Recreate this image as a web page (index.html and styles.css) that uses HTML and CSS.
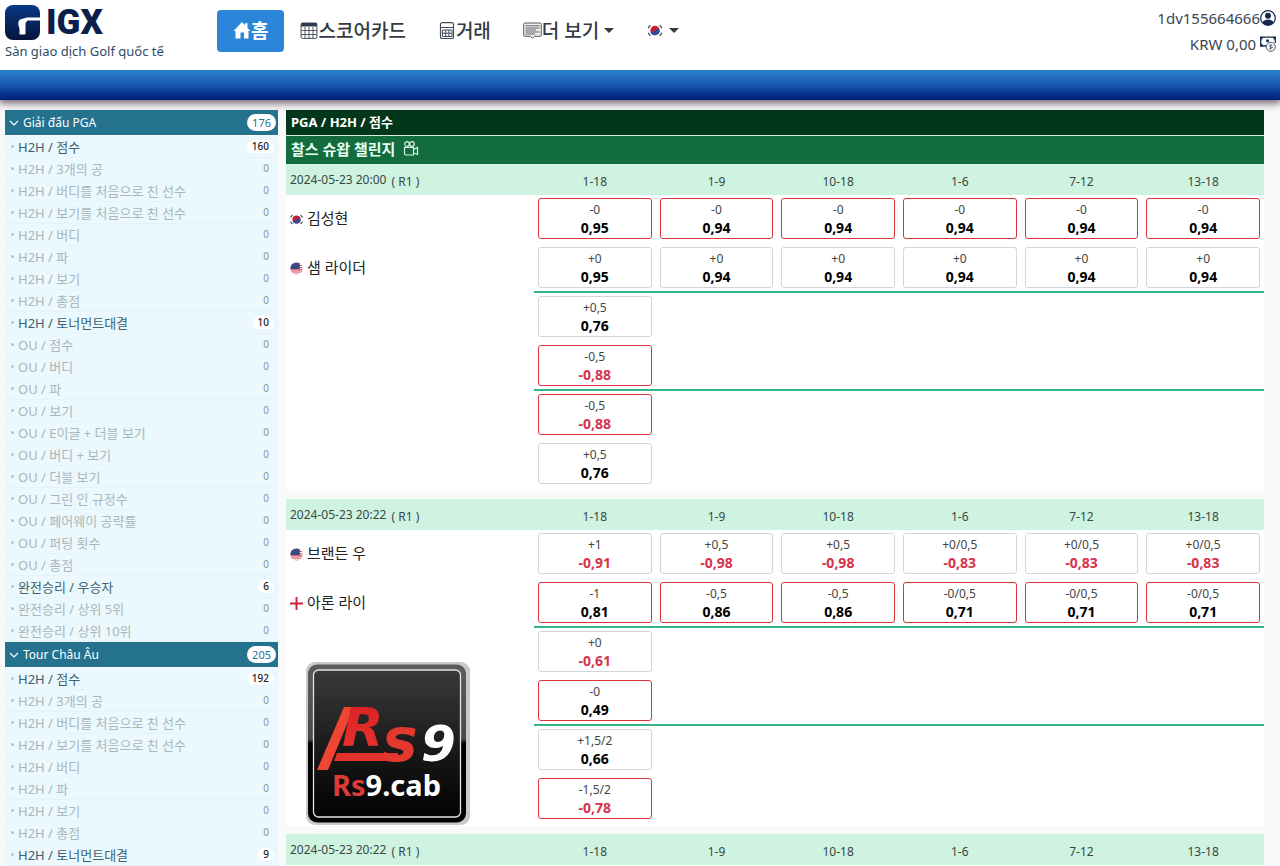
FILE: index.html
```html
<!DOCTYPE html>
<html lang="ko">
<head>
<meta charset="utf-8">
<meta name="viewport" content="width=device-width, initial-scale=1">
<title>IGX</title>
<link rel="stylesheet" href="styles.css">
</head>
<body>
<svg class="defs" width="0" height="0" aria-hidden="true">
  <defs>
    <clipPath id="round"><circle cx="8" cy="8" r="7.5"/></clipPath>
    <symbol id="flag-kr" viewBox="0 0 16 16">
      <rect width="16" height="16" fill="#fff"/>
      <circle cx="8" cy="8" r="5" fill="#c8202f"/>
      <path d="M3.200 9.500A5 5 0 0 0 12.900 7.200C11.500 5.600 9.500 6.500 8 8S4.800 10.500 3.200 9.500Z" fill="#2f4b9b"/>
      <path d="M.6 5.500 3 2.300M13 2.300 15.400 5.500M.6 10.500 3 13.700M13 13.700 15.400 10.500" stroke="#444" stroke-width="1.300"/>
    </symbol>
    <symbol id="flag-us" viewBox="0 0 16 16">
      <g clip-path="url(#round)">
        <rect width="16" height="16" fill="#fff"/>
        <path d="M0 1.500H16M0 4.300H16M0 7H16M0 9.700H16M0 12.300H16M0 15H16" stroke="#d0384a" stroke-width="1.300"/>
        <path d="M0 0H12V8.500H0Z" fill="#3a4a80"/>
      </g>
    </symbol>
    <symbol id="flag-en" viewBox="0 0 16 16">
      <path d="M8 0V16M0 8H16" stroke="#cf1f3c" stroke-width="2.400"/>
    </symbol>
  </defs>
</svg>

<header class="top">
  <div class="brand">
    <a class="brand-mark" href="#">
      <svg class="emblem" viewBox="0 0 35 35" aria-hidden="true">
        <defs><linearGradient id="navy" x1="0" y1="0" x2="0" y2="1"><stop offset="0" stop-color="#0a3a86"/><stop offset="1" stop-color="#06143a"/></linearGradient></defs>
        <rect width="35" height="35" rx="8" fill="url(#navy)"/>
        <path d="M35 12.500H22L15 14.500Q13 16 13.200 19L14.500 24V29.500H19.500Q21 29.500 20.500 26V18L22.500 15.500H35Z" fill="#fff"/>
      </svg>
      <span>IGX</span>
    </a>
    <span class="tagline">Sàn giao dịch Golf quốc tế</span>
  </div>
  <nav class="menu">
    <a class="menu-item active" href="#"><svg class="ico-home" viewBox="0 0 17 17" aria-hidden="true"><path d="M0 9 8.500 0 11.500 3.200V1.200H14V5.900L17 9H15V16.500H10.500V10.500H7V16.500H2V9Z" fill="#fff"/></svg>홈</a>
    <a class="menu-item" href="#"><svg class="ico" viewBox="0 0 17 17" aria-hidden="true"><rect x=".6" y="1" width="15.800" height="15.400" rx="1.500" fill="none" stroke="#444c58"/><path d="M.6 1H16.400V4.500H.6Z" fill="#2d3a52"/><path d="M.6 8.500H16.400M.6 12.500H16.400M4.500 5V16M8.500 5V16M12.500 5V16" stroke="#444c58" stroke-width=".9"/></svg>스코어카드</a>
    <a class="menu-item" href="#"><svg class="ico" viewBox="0 0 17 17" aria-hidden="true"><rect x="2" y=".6" width="13" height="16" rx="1.800" fill="none" stroke="#444c58" stroke-width="1.200"/><path d="M2 5.500H15M4 8H13.500V14.500H4ZM4 11.200H13.500M7.200 8V14.500M10.400 8V14.500" fill="none" stroke="#444c58"/></svg>거래</a>
    <button class="menu-item" type="button"><svg class="ico-wide" viewBox="0 0 19 17" aria-hidden="true"><path d="M2 1H17Q18.300 1 18.300 2.300V13Q18.300 14.300 17 14.300H11.500L9.500 16.200 7.500 14.300H2Q.7 14.300 .7 13V2.300Q.7 1 2 1Z" fill="#eee" stroke="#555c66"/><path d="M2.500 3.800H16.500M2.500 6H16.500M2.500 8H13M2.500 10H16.500M2.500 12H12" stroke="#5c636d"/></svg>더 보기<i class="caret"></i></button>
    <button class="menu-item" type="button" aria-label="한국어"><svg class="flag-lg" aria-hidden="true"><use href="#flag-kr"/></svg><i class="caret"></i></button>
  </nav>
  <div class="account">
    <a href="#">1dv155664666<svg viewBox="0 0 16 16" aria-hidden="true"><circle cx="8" cy="8" r="7.300" fill="#fff" stroke="#12284c" stroke-width="1.200"/><circle cx="8" cy="5.800" r="3" fill="#12284c"/><path d="M2 12.300Q4.500 9.600 8 9.600T14 12.300Q11.500 15.300 8 15.300T2 12.300Z" fill="#12284c"/></svg></a>
    <a href="#">KRW 0,00 <svg viewBox="0 0 16 16" aria-hidden="true"><path d="M6 10H.7V1.200H15.300V7M.7 3.500 2.800 1.200M13.200 1.200 15.300 3.500M.7 7.800 2.800 10M5.500 6.500" fill="none" stroke="#12284c" stroke-width="1.300"/><circle cx="7.500" cy="4.800" r="1.500" fill="#12284c"/><circle cx="10.800" cy="10.800" r="4.500" fill="#fff" stroke="#4a5566"/><path d="M12.500 9.300Q9.200 8.300 9.400 10T12.200 11.500 9.200 12.500M10.800 8V13.700" fill="none" stroke="#4a5566" stroke-width=".8"/></svg></a>
  </div>
</header>
<div class="bar"></div>

<div class="page">
  <aside class="side">
    <section>
      <h2><button type="button"><svg class="chev" viewBox="0 0 10 6" aria-hidden="true"><path d="M1 1 5 5 9 1" fill="none" stroke="#fff" stroke-width="1.200"/></svg>Giải đấu PGA<span class="total">176</span></button></h2>
      <ul>
        <li class="on"><a href="#">H2H / 점수</a><b>160</b></li>
        <li><a href="#">H2H / 3개의 공</a><b>0</b></li>
        <li><a href="#">H2H / 버디를 처음으로 친 선수</a><b>0</b></li>
        <li><a href="#">H2H / 보기를 처음으로 친 선수</a><b>0</b></li>
        <li><a href="#">H2H / 버디</a><b>0</b></li>
        <li><a href="#">H2H / 파</a><b>0</b></li>
        <li><a href="#">H2H / 보기</a><b>0</b></li>
        <li><a href="#">H2H / 총점</a><b>0</b></li>
        <li class="on"><a href="#">H2H / 토너먼트대결</a><b>10</b></li>
        <li><a href="#">OU / 점수</a><b>0</b></li>
        <li><a href="#">OU / 버디</a><b>0</b></li>
        <li><a href="#">OU / 파</a><b>0</b></li>
        <li><a href="#">OU / 보기</a><b>0</b></li>
        <li><a href="#">OU / E이글 + 더블 보기</a><b>0</b></li>
        <li><a href="#">OU / 버디 + 보기</a><b>0</b></li>
        <li><a href="#">OU / 더블 보기</a><b>0</b></li>
        <li><a href="#">OU / 그린 인 규정수</a><b>0</b></li>
        <li><a href="#">OU / 페어웨이 공략률</a><b>0</b></li>
        <li><a href="#">OU / 퍼팅 횟수</a><b>0</b></li>
        <li><a href="#">OU / 총점</a><b>0</b></li>
        <li class="on"><a href="#">완전승리 / 우승자</a><b>6</b></li>
        <li><a href="#">완전승리 / 상위 5위</a><b>0</b></li>
        <li><a href="#">완전승리 / 상위 10위</a><b>0</b></li>
      </ul>
    </section>
    <section>
      <h2><button type="button"><svg class="chev" viewBox="0 0 10 6" aria-hidden="true"><path d="M1 1 5 5 9 1" fill="none" stroke="#fff" stroke-width="1.200"/></svg>Tour Châu Âu<span class="total">205</span></button></h2>
      <ul>
        <li class="on"><a href="#">H2H / 점수</a><b>192</b></li>
        <li><a href="#">H2H / 3개의 공</a><b>0</b></li>
        <li><a href="#">H2H / 버디를 처음으로 친 선수</a><b>0</b></li>
        <li><a href="#">H2H / 보기를 처음으로 친 선수</a><b>0</b></li>
        <li><a href="#">H2H / 버디</a><b>0</b></li>
        <li><a href="#">H2H / 파</a><b>0</b></li>
        <li><a href="#">H2H / 보기</a><b>0</b></li>
        <li><a href="#">H2H / 총점</a><b>0</b></li>
        <li class="on"><a href="#">H2H / 토너먼트대결</a><b>9</b></li>
      </ul>
    </section>
  </aside>

  <main class="board">
    <h1>PGA / H2H / 점수</h1>
    <h2 class="event">찰스 슈왑 챌린지 <svg viewBox="0 0 16 15" aria-hidden="true"><circle cx="4" cy="3" r="2.300"/><circle cx="9" cy="3" r="2.300"/><path d="M1.500 6.500H10.500V14H3Q1.500 14 1.500 12.500ZM10.500 8.500 14.500 6.500V13.500L10.500 12"/></svg></h2>

    <table class="match">
      <colgroup><col class="who"><col span="6"></colgroup>
      <thead><tr><th class="when">2024-05-23 20:00 <small>( R1 )</small></th><th>1-18</th><th>1-9</th><th>10-18</th><th>1-6</th><th>7-12</th><th>13-18</th></tr></thead>
      <tbody>
        <tr><th><svg class="flag" aria-hidden="true"><use href="#flag-kr"/></svg>김성현</th>
          <td><button class="odd fav" type="button">-0<b>0,95</b></button></td>
          <td><button class="odd fav" type="button">-0<b>0,94</b></button></td>
          <td><button class="odd fav" type="button">-0<b>0,94</b></button></td>
          <td><button class="odd fav" type="button">-0<b>0,94</b></button></td>
          <td><button class="odd fav" type="button">-0<b>0,94</b></button></td>
          <td><button class="odd fav" type="button">-0<b>0,94</b></button></td></tr>
        <tr><th><svg class="flag" aria-hidden="true"><use href="#flag-us"/></svg>샘 라이더</th>
          <td><button class="odd" type="button">+0<b>0,95</b></button></td>
          <td><button class="odd" type="button">+0<b>0,94</b></button></td>
          <td><button class="odd" type="button">+0<b>0,94</b></button></td>
          <td><button class="odd" type="button">+0<b>0,94</b></button></td>
          <td><button class="odd" type="button">+0<b>0,94</b></button></td>
          <td><button class="odd" type="button">+0<b>0,94</b></button></td></tr>
      </tbody>
      <tbody>
        <tr><th></th><td><button class="odd" type="button">+0,5<b>0,76</b></button></td><td colspan="5"></td></tr>
        <tr><th></th><td><button class="odd fav" type="button">-0,5<b class="neg">-0,88</b></button></td><td colspan="5"></td></tr>
      </tbody>
      <tbody>
        <tr><th></th><td><button class="odd fav" type="button">-0,5<b class="neg">-0,88</b></button></td><td colspan="5"></td></tr>
        <tr><th></th><td><button class="odd" type="button">+0,5<b>0,76</b></button></td><td colspan="5"></td></tr>
      </tbody>
    </table>

    <table class="match">
      <colgroup><col class="who"><col span="6"></colgroup>
      <thead><tr><th class="when">2024-05-23 20:22 <small>( R1 )</small></th><th>1-18</th><th>1-9</th><th>10-18</th><th>1-6</th><th>7-12</th><th>13-18</th></tr></thead>
      <tbody>
        <tr><th><svg class="flag" aria-hidden="true"><use href="#flag-us"/></svg>브랜든 우</th>
          <td><button class="odd" type="button">+1<b class="neg">-0,91</b></button></td>
          <td><button class="odd" type="button">+0,5<b class="neg">-0,98</b></button></td>
          <td><button class="odd" type="button">+0,5<b class="neg">-0,98</b></button></td>
          <td><button class="odd" type="button">+0/0,5<b class="neg">-0,83</b></button></td>
          <td><button class="odd" type="button">+0/0,5<b class="neg">-0,83</b></button></td>
          <td><button class="odd" type="button">+0/0,5<b class="neg">-0,83</b></button></td></tr>
        <tr><th><svg class="flag" aria-hidden="true"><use href="#flag-en"/></svg>아론 라이</th>
          <td><button class="odd fav" type="button">-1<b>0,81</b></button></td>
          <td><button class="odd fav" type="button">-0,5<b>0,86</b></button></td>
          <td><button class="odd fav" type="button">-0,5<b>0,86</b></button></td>
          <td><button class="odd fav" type="button">-0/0,5<b>0,71</b></button></td>
          <td><button class="odd fav" type="button">-0/0,5<b>0,71</b></button></td>
          <td><button class="odd fav" type="button">-0/0,5<b>0,71</b></button></td></tr>
      </tbody>
      <tbody>
        <tr><th></th><td><button class="odd" type="button">+0<b class="neg">-0,61</b></button></td><td colspan="5"></td></tr>
        <tr><th></th><td><button class="odd fav" type="button">-0<b>0,49</b></button></td><td colspan="5"></td></tr>
      </tbody>
      <tbody>
        <tr><th></th><td><button class="odd" type="button">+1,5/2<b>0,66</b></button></td><td colspan="5"></td></tr>
        <tr><th></th><td><button class="odd fav" type="button">-1,5/2<b class="neg">-0,78</b></button></td><td colspan="5"></td></tr>
      </tbody>
    </table>

    <table class="match">
      <colgroup><col class="who"><col span="6"></colgroup>
      <thead><tr><th class="when">2024-05-23 20:22 <small>( R1 )</small></th><th>1-18</th><th>1-9</th><th>10-18</th><th>1-6</th><th>7-12</th><th>13-18</th></tr></thead>
    </table>

    <svg class="badge" viewBox="0 0 164 164" role="img" aria-label="Rs9.cab">
      <defs>
        <linearGradient id="frame" x1="0" y1="0" x2="0" y2="1"><stop offset="0" stop-color="#5c5c5c"/><stop offset=".47" stop-color="#4a4a4a"/><stop offset=".5" stop-color="#000"/><stop offset="1" stop-color="#000"/></linearGradient>
        <linearGradient id="panel" x1="0" y1="0" x2="0" y2="1"><stop offset="0" stop-color="#3a3a3a"/><stop offset=".6" stop-color="#161616"/><stop offset="1" stop-color="#020202"/></linearGradient>
        <linearGradient id="red" x1="0" y1="0" x2="0" y2="1"><stop offset="0" stop-color="#d81f24"/><stop offset="1" stop-color="#e8352c"/></linearGradient>
      </defs>
      <rect width="164" height="163" rx="9" fill="#c9c9c9"/>
      <rect x="2" y="2.500" width="158" height="158" rx="9" fill="url(#frame)"/>
      <rect x="7.500" y="8" width="147" height="147" rx="5" fill="url(#panel)" stroke="#e4e4e4" stroke-width="1.300"/>
      <path d="M38 45H48L22 108H11Z" fill="#ef4634"/>
      <path d="M31 91H92V99H28Z" fill="#e0312a"/>
      <text x="36" y="84" class="art-r">R</text>
      <text x="76" y="99" class="art-s">s</text>
      <text x="115" y="99" class="art-9">9</text>
      <text x="26" y="134" class="art-name"><tspan fill="#dc3a36">Rs</tspan>9.cab</text>
    </svg>
  </main>
</div>
</body>
</html>
```

FILE: styles.css
```css
* { box-sizing: border-box; }

body {
  margin: 0;
  background: #f8f9f9;
  color: #222;
  font-family: "Noto Sans", "Noto Sans CJK KR", sans-serif;
  font-size: 13px;
}

button { font: inherit; color: inherit; background: none; border: 0; padding: 0; cursor: pointer; }
a { color: inherit; text-decoration: none; }
h1, h2, ul { margin: 0; padding: 0; }
ul { list-style: none; }
.defs { position: absolute; }

.top {
  position: relative;
  z-index: 1;
  display: flex;
  align-items: flex-start;
  height: 70px;
  padding: 5px 4px 0 5px;
  background: #fff;
}
.brand { flex: 0 0 212px; }
.brand-mark { display: flex; align-items: center; gap: 6px; height: 35px; color: #0c1f4c; font: 900 35px/35px Roboto, sans-serif; }
.emblem { width: 35px; height: 35px; }
.tagline { display: block; color: #2f4a66; line-height: 22px; }

.menu { display: flex; padding-top: 5px; }
.menu-item {
  display: flex;
  align-items: center;
  height: 42px;
  padding: 0 16px 2px;
  border-radius: 4px;
  color: #333a45;
  font-size: 19px;
  font-weight: 500;
  white-space: nowrap;
}
.menu-item.active { background: #2b86d9; color: #fff; font-weight: 700; }
.ico-home, .ico { width: 18px; height: 17px; }
.ico-wide { width: 19px; height: 17px; }
.flag-lg { width: 18px; height: 15px; }
.caret { margin-left: 5px; border: 5px solid transparent; border-top-color: #333a45; border-bottom: 0; }

.account { display: flex; flex-direction: column; align-items: flex-end; margin-left: auto; color: #3a4554; font-size: 15px; }
.account a { display: flex; align-items: center; height: 28px; white-space: pre; }
.account a:first-child { height: 25px; }
.account svg { width: 16px; height: 16px; }

.bar {
  height: 30px;
  background: linear-gradient(#2c83cf, #1657ae 50%, #001c7c);
  box-shadow: 0 2px 8px 1px #6b5a66;
}

.page { display: flex; align-items: flex-start; gap: 8px; padding: 10px 16px 0 5px; }

.side { flex: 0 0 273px; }
.side h2 { margin-bottom: 1px; font: inherit; }
.side h2 button { display: flex; align-items: center; width: 100%; height: 25px; padding: 0 2px 0 4px; background: #25728e; color: #fff; font-size: 12px; }
.chev { width: 10px; height: 6px; margin-right: 4px; }
.total { margin-left: auto; padding: 0 5px; border-radius: 9px; background: #fff; color: #25728e; font-size: 11px; line-height: 17px; }
.side li {
  display: flex;
  align-items: center;
  height: 22px;
  padding: 0 4px 0 6px;
  border-bottom: 1px solid #e5f3f8;
  background: #ebf8fd;
  color: #a9b7bc;
}
.side li::before { content: ""; width: 3px; height: 3px; margin-right: 4px; border-radius: 50%; background: #b4c4ca; }
.side li b { margin-left: auto; padding: 0 5px; border-radius: 7px; color: #8b9699; font-size: 10px; font-weight: 400; line-height: 13px; }
.side .on { color: #3d626e; }
.side .on b { background: #fff; color: #222; font-weight: 500; }

.board { position: relative; flex: 1; min-width: 0; }
.board h1 { padding-left: 5px; background: #03371c; border-bottom: 1px solid #d7efe2; color: #fff; font-size: 13px; line-height: 25px; }
.event { display: flex; align-items: center; gap: 8px; height: 28px; padding: 0 0 3px 5px; background: #136c3e; color: #eafff3; font-size: 15px; }
.event svg { width: 16px; height: 15px; fill: none; stroke: #dff5e8; stroke-width: 1.2; }

.match { width: 100%; margin-bottom: 8px; table-layout: fixed; border-collapse: separate; border-spacing: 0; background: #fff; }
.match:last-of-type { margin-bottom: 0; }
.who { width: 248px; }
.match th { padding: 0 4px 4px; font-weight: 400; }
.match thead th { height: 31px; padding: 5px 4px 0; background: #cff3e1; color: #3a4742; font-size: 12px; line-height: 24px; }
.match thead .when { padding: 0 4px; text-align: left; vertical-align: top; line-height: 31px; }
.when small { margin-left: 2px; font-size: 12px; vertical-align: -2px; line-height: 1; }
.match tbody th { font-size: 15px; text-align: left; }
.flag { width: 13px; height: 13px; margin-right: 4px; vertical-align: -2px; }
.match td { padding: 3px 4px 4px; }
.match tr:last-child td { padding: 4px 4px 3px; border-bottom: 2px solid #34b68b; }
.match tbody:last-child tr:last-child td { padding-bottom: 7px; border-bottom: 0; }

.odd {
  display: block;
  width: 100%;
  height: 41px;
  border: 1px solid #d3d6d8;
  border-radius: 3px;
  background: #fff;
  color: #444;
  font-size: 12px;
  line-height: 18px;
}
.odd b { display: block; color: #000; font-size: 14px; }
.odd .neg { color: #d6334a; }
.odd.fav { border-color: #d93338; }

.badge { position: absolute; left: 20px; top: 552px; width: 164px; height: 164px; }
.badge text { font-family: "DejaVu Sans", sans-serif; font-weight: 700; font-style: italic; }
.badge .art-r { font-size: 54px; fill: url(#red); }
.badge .art-s { font-size: 60px; fill: #e3382e; }
.badge .art-9 { font-size: 50px; fill: #fff; }
.badge .art-name { font-family: "Noto Sans", sans-serif; font-size: 29px; font-weight: 700; font-style: normal; fill: #fff; }
```
